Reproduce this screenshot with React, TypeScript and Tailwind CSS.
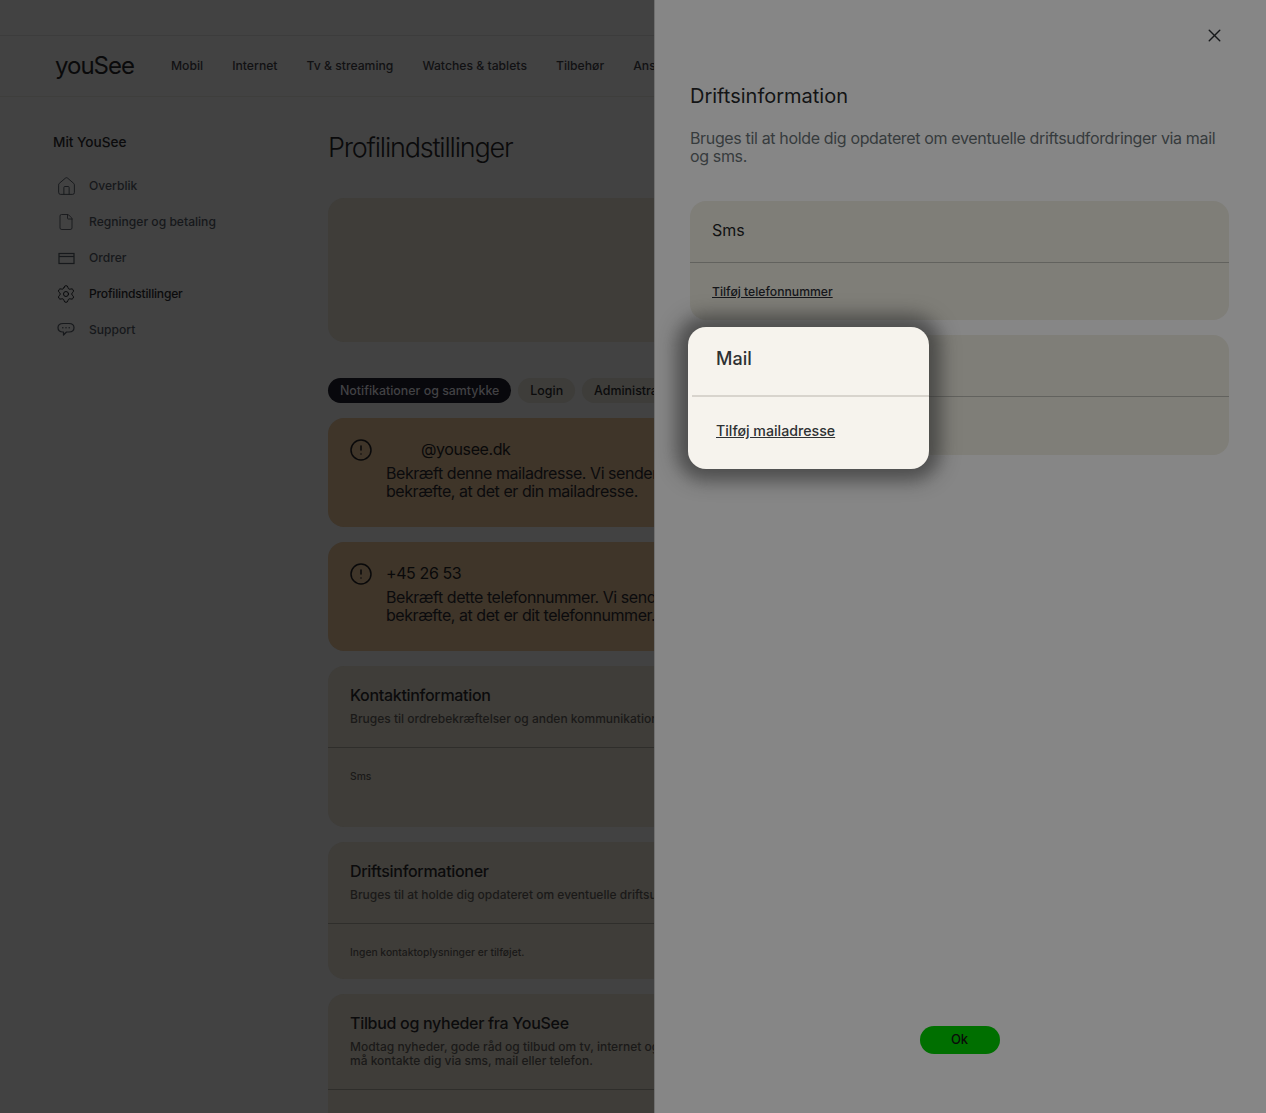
import { CircleAlert, File, House, Settings, X } from "lucide-react";

const navItems = ["Mobil", "Internet", "Tv & streaming", "Watches & tablets", "Tilbehør", "Anslutning"];

function OrderIcon() {
	return (
		<svg width="17" height="17" viewBox="0 0 17 17" fill="none" stroke="#17191c" strokeWidth="1.2">
			<rect x="1" y="3.5" width="15" height="10" />
			<path d="M1 6.5h15" />
		</svg>
	);
}

function SupportIcon() {
	return (
		<svg width="18" height="18" viewBox="0 0 18 18" fill="none" stroke="#17191c" strokeWidth="1.2">
			<path d="M6 2.5h6c3 0 5 1.8 5 4.3s-2 4.2-5 4.2H9.5L6.5 14v-3H6C3 11 1 9.300 1 6.800S3 2.500 6 2.500Z" strokeLinejoin="round" />
			<path d="M5.800 6.800h.01M9 6.800h.01M12.200 6.800h.01" strokeLinecap="round" strokeWidth="1.500" />
		</svg>
	);
}

const sideItems = [
	{ label: "Overblik", icon: <House size={21} strokeWidth={1.1} color="#17191c" /> },
	{ label: "Regninger og betaling", icon: <File size={18} strokeWidth={1.2} color="#17191c" /> },
	{ label: "Ordrer", icon: <OrderIcon /> },
	{ label: "Profilindstillinger", icon: <Settings size={20} strokeWidth={1.2} color="#08090b" />, active: true },
	{ label: "Support", icon: <SupportIcon /> },
];

function Alert({ title, line1, line2, indent }: { title: string; line1: string; line2: string; indent?: boolean }) {
	return (
		<div className="flex h-[109px] gap-[13px] rounded-2xl bg-[#3f3529] pl-[21px] pt-5 text-[#09090a]">
			<CircleAlert size={24} strokeWidth={1.5} className="shrink-0" />
			<div>
				<div className={`text-[16px] leading-[22px] tracking-[-0.4px] ${indent ? "pl-[35px]" : ""}`}>{title}</div>
				<div className="mt-1 whitespace-nowrap text-[16px] leading-[18px] tracking-[-0.45px] text-[#0b0b0d]">
					{line1}
					<br />
					{line2}
				</div>
			</div>
		</div>
	);
}

function Section({ title, text, height, headHeight, children }: { title: string; text: React.ReactNode; height: string; headHeight: string; children: React.ReactNode }) {
	return (
		<div className={`${height} overflow-hidden rounded-2xl bg-[#3f3d39]`}>
			<div className={`${headHeight} border-b border-[#2f2e2b] px-[22px] pt-[18px]`}>
				<h2 className="text-[16px] font-medium leading-[22px] tracking-[-0.3px] text-[#0b0b0c]">{title}</h2>
				<p className="mt-[6px] whitespace-nowrap text-[12px] font-[450] leading-[14px] text-[#1a1918]">{text}</p>
			</div>
			<div className="px-[22px] pt-[21px] text-[10.300px] font-[450] leading-[14px] text-[#1a1918]">{children}</div>
		</div>
	);
}

export default function App() {
	return (
		<div className="relative h-[1113px] w-full overflow-hidden bg-[#424242] font-['Inter',sans-serif]">
			<div className="h-9 border-b border-[#3c3c3c]" />
			<header className="flex h-[61px] items-center border-b border-[#3e3e3c] pl-[55px]">
				<span className="w-[116px] text-[24px] leading-none tracking-[-1px] text-[#0a0a0b]">youSee</span>
				<nav className="flex gap-[29px] whitespace-nowrap pt-px text-[12.200px] font-medium text-[#111113]">
					{navItems.map(item => (
						<span key={item}>{item}</span>
					))}
				</nav>
			</header>
			<div className="flex">
				<aside className="w-[328px] shrink-0 pl-[53px] pt-[36px]">
					<h3 className="text-[13.600px] font-medium leading-[18px] text-[#0b0b0c]">Mit YouSee</h3>
					<ul className="mt-[17px] flex flex-col">
						{sideItems.map(item => (
							<li key={item.label} className={`flex h-9 items-center text-[12.100px] ${item.active ? "font-medium tracking-[-0.2px] text-[#0b0b0c]" : "font-[450] text-[#16181b]"}`}>
								<span className="flex w-9 justify-center pr-[10px]">{item.icon}</span>
								{item.label}
							</li>
						))}
					</ul>
				</aside>
				<main className="w-[620px] shrink-0">
					<h1 className="pt-[34px] text-[27px] font-light leading-[34px] tracking-[-1.200px] text-[#0a0a0b]">Profilindstillinger</h1>
					<div className="mt-[33px] h-[144px] rounded-2xl bg-[#3f3d39]" />
					<div className="mt-9 flex gap-[7px] whitespace-nowrap text-[12.400px] font-medium">
						<span className="flex h-[25px] items-center rounded-full bg-[#08080c] px-3 pt-px text-[#424245]">Notifikationer og samtykke</span>
						<span className="flex h-[25px] items-center rounded-full bg-[#3e3d3a] px-3 pt-px text-[#0b0b0c]">Login</span>
						<span className="flex h-[25px] items-center rounded-full bg-[#3e3d3a] px-3 pt-px text-[#0b0b0c]">Administration</span>
					</div>
					<div className="mt-[15px] flex flex-col gap-[15px]">
						<Alert title="@yousee.dk" indent line1="Bekræft denne mailadresse. Vi sender dig en mail, så du kan" line2="bekræfte, at det er din mailadresse." />
						<Alert title="+45 26 53" line1="Bekræft dette telefonnummer. Vi sender dig en sms, så du kan" line2="bekræfte, at det er dit telefonnummer." />
						<Section title="Kontaktinformation" text="Bruges til ordrebekræftelser og anden kommunikation" height="h-[161px]" headHeight="h-[82px]">
							Sms
						</Section>
						<Section title="Driftsinformationer" text="Bruges til at holde dig opdateret om eventuelle driftsudfordringer" height="h-[137px]" headHeight="h-[82px]">
							Ingen kontaktoplysninger er tilføjet.
						</Section>
						<Section
							title="Tilbud og nyheder fra YouSee"
							text={
								<>
									Modtag nyheder, gode råd og tilbud om tv, internet og mobil, og at vi
									<br />
									må kontakte dig via sms, mail eller telefon.
								</>
							}
							height="h-[200px]"
							headHeight="h-[96px]"
						>
							{" "}
						</Section>
					</div>
				</main>
			</div>

			<aside className="absolute inset-y-0 right-0 flex w-[612px] flex-col border-l border-[#6f6f6f] bg-[#868686] pb-[59px] pl-[35px] pr-[37px]">
				<button className="absolute right-[41px] top-[25px] text-[#16181a]">
					<X size={21} strokeWidth={1.6} />
				</button>
				<h2 className="mt-[84px] text-[20px] leading-6 text-[#131415]">Driftsinformation</h2>
				<p className="mt-[21px] text-[16px] leading-[18px] tracking-[-0.350px] text-[#363b3d]">
					Bruges til at holde dig opdateret om eventuelle driftsudfordringer via mail og sms.
				</p>
				<div className="mt-[36px] flex flex-col gap-[15px]">
					<div className="h-[119px] rounded-2xl bg-[#7f7e78]">
						<div className="h-[62px] border-b border-[#62625e] px-[22px] pt-[19px] text-[16px] leading-5 text-[#101112]">Sms</div>
						<a className="ml-[22px] mt-[21px] inline-block text-[12.200px] font-medium leading-4 text-[#15161a] underline">Tilføj telefonnummer</a>
					</div>
					<div className="h-[120px] rounded-2xl bg-[#7f7e78]">
						<div className="h-[62px] border-b border-[#62625e]" />
					</div>
				</div>
				<button className="mt-auto h-7 w-20 self-center rounded-full bg-[#006f00] text-[13px] font-medium text-[#0a0a0a]">Ok</button>
			</aside>

			<div className="absolute left-[688px] top-[327px] h-[142px] w-[241px] rounded-[18px] bg-[#f6f3ed] shadow-[0_0_18px_12px_rgba(40,40,40,0.6)]">
				<div className="ml-1 h-[70px] border-b-2 border-[#d8d4cd] pl-6 pt-5 text-[18px] font-medium leading-6 text-[#2e3133]">Mail</div>
				<a className="ml-7 mt-[25px] inline-block text-[14.200px] font-medium leading-[18px] text-[#2e3133] underline">Tilføj mailadresse</a>
			</div>
		</div>
	);
}
